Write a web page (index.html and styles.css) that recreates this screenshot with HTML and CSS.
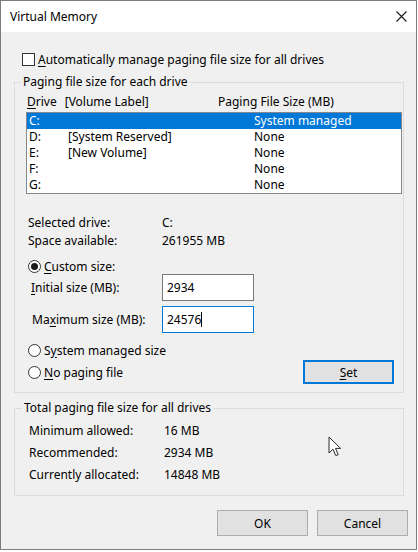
FILE: index.html
```html
<!DOCTYPE html>
<html lang="en">
<head>
<meta charset="utf-8">
<title>Virtual Memory</title>
<link rel="stylesheet" href="styles.css">
</head>
<body>
<div class="window">
  <div class="titlebar">
    <span class="title">Virtual Memory</span>
    <svg class="close" width="11" height="11" viewBox="0 0 11 11"><path d="M0.5 0.5 L10.5 10.5 M10.5 0.5 L0.5 10.5" stroke="#1a1a1a" stroke-width="1.1" fill="none"/></svg>
  </div>
  <div class="content">
    <div class="check-row">
      <span class="checkbox"></span>
      <span class="check-label"><u>A</u>utomatically manage paging file size for all drives</span>
    </div>

    <fieldset class="group group-drives">
      <legend>Paging file size for each drive</legend>
      <div class="list-header">
        <span class="h-drive"><u>D</u>rive<span class="h-vol">[Volume Label]</span></span>
        <span class="h-size">Paging File Size (MB)</span>
      </div>
      <div class="listbox">
        <div class="list-row selected"><span class="c-letter">C:</span><span class="c-label"></span><span class="c-size">System managed</span></div>
        <div class="list-row"><span class="c-letter">D:</span><span class="c-label">[System Reserved]</span><span class="c-size">None</span></div>
        <div class="list-row"><span class="c-letter">E:</span><span class="c-label">[New Volume]</span><span class="c-size">None</span></div>
        <div class="list-row"><span class="c-letter">F:</span><span class="c-label"></span><span class="c-size">None</span></div>
        <div class="list-row"><span class="c-letter">G:</span><span class="c-label"></span><span class="c-size">None</span></div>
      </div>

      <div class="info">
        <div class="info-row"><span class="info-label">Selected drive:</span><span>C:</span></div>
        <div class="info-row"><span class="info-label">Space available:</span><span>261955 MB</span></div>
      </div>

      <div class="radio-row radio-custom">
        <span class="radio checked"></span>
        <span><u>C</u>ustom size:</span>
      </div>
      <div class="field-row field-initial">
        <span class="field-label"><u>I</u>nitial size (MB):</span>
        <span class="textbox">2934</span>
      </div>
      <div class="field-row field-max">
        <span class="field-label field-label-max">Ma<u>x</u>imum size (MB):</span>
        <span class="textbox focused">24576<span class="caret"></span></span>
      </div>
      <div class="radio-row radio-system">
        <span class="radio"></span>
        <span>S<u>y</u>stem managed size</span>
      </div>
      <div class="last-row">
        <div class="radio-row">
          <span class="radio"></span>
          <span><u>N</u>o paging file</span>
        </div>
        <button class="btn btn-default"><u>S</u>et</button>
      </div>
    </fieldset>

    <fieldset class="group group-total">
      <legend>Total paging file size for all drives</legend>
      <div class="total-row"><span class="total-label">Minimum allowed:</span><span>16 MB</span></div>
      <div class="total-row"><span class="total-label">Recommended:</span><span>2934 MB</span></div>
      <div class="total-row"><span class="total-label">Currently allocated:</span><span>14848 MB</span></div>
    </fieldset>

    <div class="buttons">
      <button class="btn">OK</button>
      <button class="btn">Cancel</button>
    </div>
  </div>
  <svg class="cursor" width="14" height="21" viewBox="0 0 14 21"><path d="M1 1 L1 17 L5 13.2 L7.8 19.6 L10.2 18.6 L7.5 12.4 L12.6 12.4 Z" fill="#ffffff" stroke="#2a2a2a" stroke-width="1" stroke-linejoin="round"/></svg>
</div>
</body>
</html>
```

FILE: styles.css
```css
* { box-sizing: border-box; }

html, body {
  margin: 0;
  padding: 0;
  background: #ffffff;
}

body {
  font-family: "Noto Sans", "Open Sans", sans-serif;
  font-size: 12px;
  color: #000;
}

u { text-decoration: underline; text-underline-offset: 2px; }

.window {
  position: relative;
  width: 417px;
  height: 550px;
  border: 1px solid #7c7c7c;
  background: #f0f0f0;
  display: flex;
  flex-direction: column;
}

.titlebar {
  height: 31px;
  background: #ffffff;
  display: flex;
  align-items: center;
  justify-content: space-between;
  padding: 0 9px 0 9px;
  flex: none;
}

.title { font-size: 12px; color: #000; }

.close { display: block; }

.content {
  flex: 1;
  display: flex;
  flex-direction: column;
}

.check-row {
  display: flex;
  align-items: center;
  height: 16px;
  margin: 19px 0 0 21px;
}

.checkbox {
  width: 13px;
  height: 13px;
  border: 1px solid #333;
  background: #fff;
  margin-right: 3px;
  flex: none;
}

.group {
  margin: 7px 12px 0 13px;
  border: 1px solid #dcdcdc;
  min-width: 0;
}

.group legend {
  padding: 0 2px;
  line-height: 16px;
  height: 16px;
}

.group-drives {
  padding: 4px 0 8px 11px;
}

.group-drives legend { margin-left: -5px; }

.list-header {
  display: flex;
  height: 16px;
  line-height: 16px;
  padding-left: 1px;
}

.h-drive { width: 191px; }
.h-vol { margin-left: 8px; }

.listbox {
  margin-top: 2px;
  width: 376px;
  border: 1px solid #828790;
  background: #fff;
}

.list-row {
  display: flex;
  height: 16px;
  line-height: 16px;
  padding-left: 2px;
}

.list-row.selected {
  background: #0078d7;
  color: #fff;
}

.c-letter { width: 39px; }
.c-label { width: 186px; }

.info { margin-top: 20px; }

.info-row {
  display: flex;
  height: 18px;
  line-height: 18px;
  padding-left: 2px;
}

.info-label { width: 134px; }

.radio-row {
  display: flex;
  align-items: center;
  height: 16px;
  padding-left: 2px;
}

.radio {
  width: 13px;
  height: 13px;
  border: 1px solid #333;
  border-radius: 50%;
  background: #fff;
  margin-right: 3px;
  flex: none;
  display: flex;
  align-items: center;
  justify-content: center;
}

.radio.checked::after {
  content: "";
  width: 7px;
  height: 7px;
  border-radius: 50%;
  background: #1a1a1a;
}

.radio-custom { margin-top: 9px; height: 15px; }

.field-row {
  display: flex;
  align-items: center;
  height: 27px;
  padding-left: 5px;
}

.field-max { margin-top: 5px; }

.field-label { width: 131px; }
.field-label-max { padding-left: 1px; }

.textbox {
  width: 92px;
  height: 27px;
  border: 1px solid #7a7a7a;
  background: #fff;
  padding-left: 4px;
  display: flex;
  align-items: center;
}

.textbox.focused { border-color: #0078d7; }

.caret {
  display: inline-block;
  width: 1px;
  height: 15px;
  background: #000;
  margin-left: 0;
}

.radio-system { margin-top: 9px; }

.last-row {
  margin-top: 2px;
  display: flex;
  align-items: center;
  justify-content: space-between;
  height: 24px;
  padding-right: 9px;
}

.btn {
  font-family: inherit;
  font-size: 12px;
  color: #000;
  background: #e1e1e1;
  border: 1px solid #adadad;
  width: 91px;
  height: 26px;
  padding: 0;
  margin: 0;
}

.btn-default {
  border: 2px solid #0078d7;
  height: 24px;
}

.group-total {
  padding: 4px 0 9px 14px;
}

.group-total legend { margin-left: -7px; }

.total-row {
  display: flex;
  height: 22px;
  line-height: 22px;
}

.total-label { width: 135px; }

.buttons {
  margin-top: 14px;
  display: flex;
  justify-content: flex-end;
  gap: 9px;
  padding-right: 8px;
}

.cursor {
  position: absolute;
  left: 327px;
  top: 435px;
}
```
